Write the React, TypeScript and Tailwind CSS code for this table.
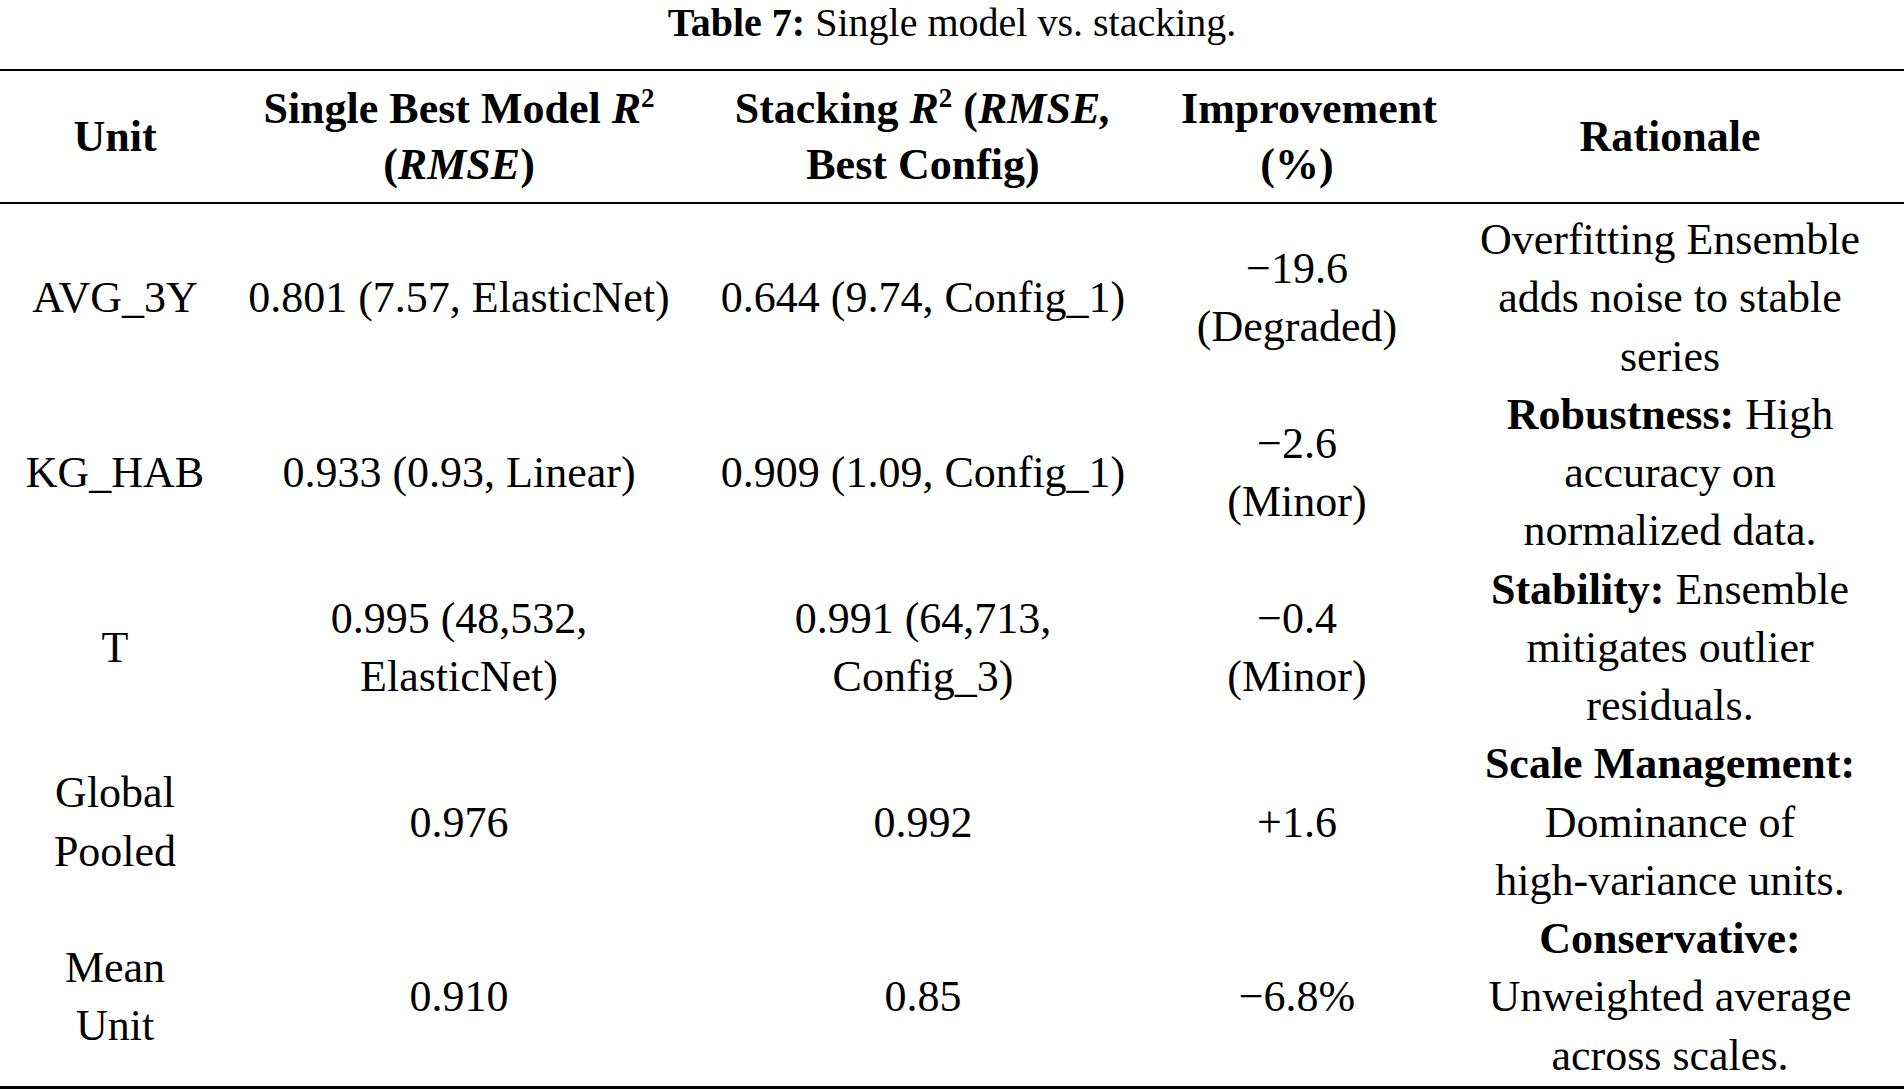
import React from "react";

const cols = "grid grid-cols-[230px_458px_470px_278px_468px]";

type Row = {
  unit: React.ReactNode;
  single: React.ReactNode;
  stack: React.ReactNode;
  impr: React.ReactNode;
  why: React.ReactNode;
};

const rows: Row[] = [
  {
    unit: "AVG_3Y",
    single: "0.801 (7.57, ElasticNet)",
    stack: "0.644 (9.74, Config_1)",
    impr: (
      <>
        −19.6
        <br />
        (Degraded)
      </>
    ),
    why: (
      <>
        Overfitting Ensemble
        <br />
        adds noise to stable
        <br />
        series
      </>
    ),
  },
  {
    unit: "KG_HAB",
    single: "0.933 (0.93, Linear)",
    stack: "0.909 (1.09, Config_1)",
    impr: (
      <>
        −2.6
        <br />
        (Minor)
      </>
    ),
    why: (
      <>
        <b className="font-bold">Robustness:</b> High
        <br />
        accuracy on
        <br />
        normalized data.
      </>
    ),
  },
  {
    unit: "T",
    single: (
      <>
        0.995 (48,532,
        <br />
        ElasticNet)
      </>
    ),
    stack: (
      <>
        0.991 (64,713,
        <br />
        Config_3)
      </>
    ),
    impr: (
      <>
        −0.4
        <br />
        (Minor)
      </>
    ),
    why: (
      <>
        <b className="font-bold">Stability:</b> Ensemble
        <br />
        mitigates outlier
        <br />
        residuals.
      </>
    ),
  },
  {
    unit: (
      <>
        Global
        <br />
        Pooled
      </>
    ),
    single: "0.976",
    stack: "0.992",
    impr: "+1.6",
    why: (
      <>
        <b className="font-bold">Scale Management:</b>
        <br />
        Dominance of
        <br />
        high-variance units.
      </>
    ),
  },
  {
    unit: (
      <>
        Mean
        <br />
        Unit
      </>
    ),
    single: "0.910",
    stack: "0.85",
    impr: "−6.8%",
    why: (
      <>
        <b className="font-bold">Conservative:</b>
        <br />
        Unweighted average
        <br />
        across scales.
      </>
    ),
  },
];

function Cell({ children }: { children: React.ReactNode }) {
  return <div className="flex items-center justify-center text-center whitespace-nowrap">{children}</div>;
}

export default function App() {
  return (
    <div className="w-[1904px] h-[1089px] bg-white text-black font-['Liberation_Serif',serif] overflow-hidden">
      <div className="h-[69px] text-center text-[40px] leading-[45px]">
        <span className="font-bold">Table 7:</span> Single model vs. stacking.
      </div>

      <div className="border-t-2 border-black">
        {/* header */}
        <div className={`${cols} pt-[10px] pb-[9px] text-[44px] leading-[56px] font-bold border-b-2 border-black`}>
          <Cell>Unit</Cell>
          <Cell>
            <span>
              Single Best Model <i>R</i>
              <sup className="text-[27px] top-[-16px]">2</sup>
              <br />(<i>RMSE</i>)
            </span>
          </Cell>
          <Cell>
            <span>
              Stacking <i>R</i>
              <sup className="text-[27px] top-[-16px]">2</sup> (<i>RMSE,</i>
              <br />
              Best Config)
            </span>
          </Cell>
          <Cell>
            <span>
              <span className="pl-[24px]">Improvement</span>
              <br />
              (%)
            </span>
          </Cell>
          <Cell>Rationale</Cell>
        </div>

        {/* body */}
        <div className="pt-[7px] pb-[1px] text-[44px] leading-[58.25px] border-b-[3px] border-black">
          {rows.map((r, i) => (
            <div key={i} className={`${cols} h-[174.75px]`}>
              <Cell>
                <span>{r.unit}</span>
              </Cell>
              <Cell>
                <span>{r.single}</span>
              </Cell>
              <Cell>
                <span>{r.stack}</span>
              </Cell>
              <Cell>
                <span>{r.impr}</span>
              </Cell>
              <Cell>
                <span>{r.why}</span>
              </Cell>
            </div>
          ))}
        </div>
      </div>
    </div>
  );
}
